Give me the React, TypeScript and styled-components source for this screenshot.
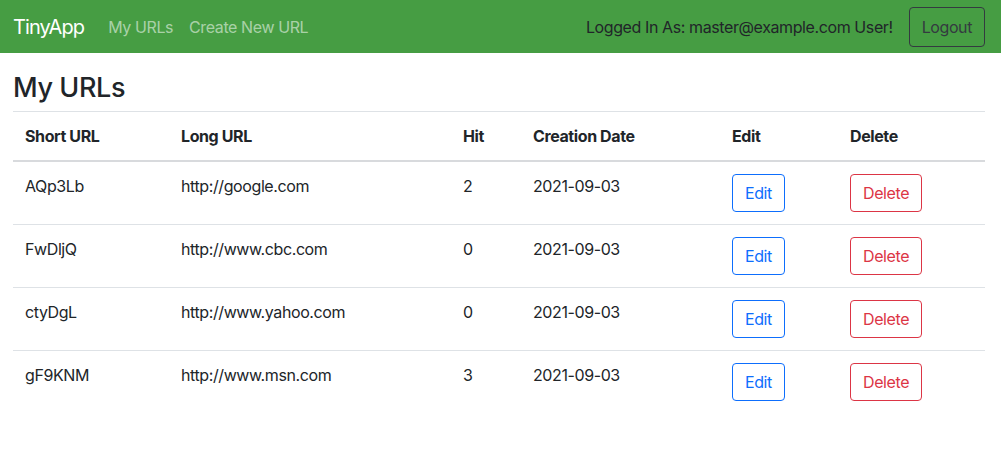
import React from "react";
import styled, { createGlobalStyle } from "styled-components";

const Global = createGlobalStyle`
  html, body { margin: 0; padding: 0; background: #fff; }
  body {
    font-family: Inter, "Noto Sans", "Liberation Sans", sans-serif;
    font-size: 16px;
    line-height: 1.5;
    letter-spacing: -0.4px;
    color: #212529;
  }
  * { box-sizing: border-box; }
`;

const Nav = styled.nav`
  display: flex;
  align-items: center;
  justify-content: space-between;
  height: 53px;
  padding: 0 16px 0 13px;
  background: #469d43;
`;

const NavLeft = styled.div`
  display: flex;
  align-items: center;
`;

const Brand = styled.a`
  font-size: 20px;
  letter-spacing: -0.9px;
  color: #fff;
  text-decoration: none;
  margin-right: 16px;
  line-height: 30px;
`;

const NavLink = styled.a`
  padding: 8px;
  color: rgba(255, 255, 255, 0.55);
  text-decoration: none;
`;

const NavRight = styled.div`
  display: flex;
  align-items: center;
  gap: 16px;
`;

const UserText = styled.span`
  color: #212529;
`;

const OutlineButton = styled.button<{ $tone: string }>`
  font: inherit;
  font-size: 16px;
  line-height: 24px;
  letter-spacing: -0.4px;
  padding: 6px 12px;
  background: transparent;
  color: ${(p) => p.$tone};
  border: 1px solid ${(p) => p.$tone};
  border-radius: 4px;
  cursor: pointer;
`;

const LogoutButton = styled(OutlineButton)`
  padding: 7px 12px;
`;

const Main = styled.main`
  padding: 18px 16px 0 13px;
`;

const Title = styled.h1`
  margin: 0 0 6px;
  font-size: 27px;
  font-weight: 500;
  line-height: 34px;
`;

const Table = styled.table`
  width: 100%;
  border-collapse: collapse;
  border-top: 1px solid #dee2e6;
  table-layout: fixed;
`;

const Th = styled.th<{ $w: number }>`
  width: ${(p) => p.$w}px;
  text-align: left;
  font-weight: 700;
  padding: 12px;
  border-bottom: 2px solid #d8dadd;
  vertical-align: bottom;
`;

const Td = styled.td`
  padding: 12px;
  vertical-align: top;
  border-bottom: 1px solid #dee2e6;
`;

const Row = styled.tr`
  &:last-child td { border-bottom: none; }
`;

const cols = [
  { label: "Short URL", w: 156 },
  { label: "Long URL", w: 282 },
  { label: "Hit", w: 70 },
  { label: "Creation Date", w: 199 },
  { label: "Edit", w: 118 },
  { label: "Delete", w: 147 },
];

const urls = [
  { id: "AQp3Lb", long: "http://google.com", hit: 2 },
  { id: "FwDljQ", long: "http://www.cbc.com", hit: 0 },
  { id: "ctyDgL", long: "http://www.yahoo.com", hit: 0 },
  { id: "gF9KNM", long: "http://www.msn.com", hit: 3 },
];

export default function App() {
  return (
    <>
      <Global />
      <Nav>
        <NavLeft>
          <Brand href="#">TinyApp</Brand>
          <NavLink href="#">My URLs</NavLink>
          <NavLink href="#">Create New URL</NavLink>
        </NavLeft>
        <NavRight>
          <UserText>Logged In As: master@example.com User!</UserText>
          <LogoutButton $tone="#343a40">Logout</LogoutButton>
        </NavRight>
      </Nav>
      <Main>
        <Title>My URLs</Title>
        <Table>
          <thead>
            <tr>
              {cols.map((c) => (
                <Th key={c.label} $w={c.w}>
                  {c.label}
                </Th>
              ))}
            </tr>
          </thead>
          <tbody>
            {urls.map((u) => (
              <Row key={u.id}>
                <Td>{u.id}</Td>
                <Td>{u.long}</Td>
                <Td>{u.hit}</Td>
                <Td>2021-09-03</Td>
                <Td>
                  <OutlineButton $tone="#0d6efd">Edit</OutlineButton>
                </Td>
                <Td>
                  <OutlineButton $tone="#dc3545">Delete</OutlineButton>
                </Td>
              </Row>
            ))}
          </tbody>
        </Table>
      </Main>
    </>
  );
}
